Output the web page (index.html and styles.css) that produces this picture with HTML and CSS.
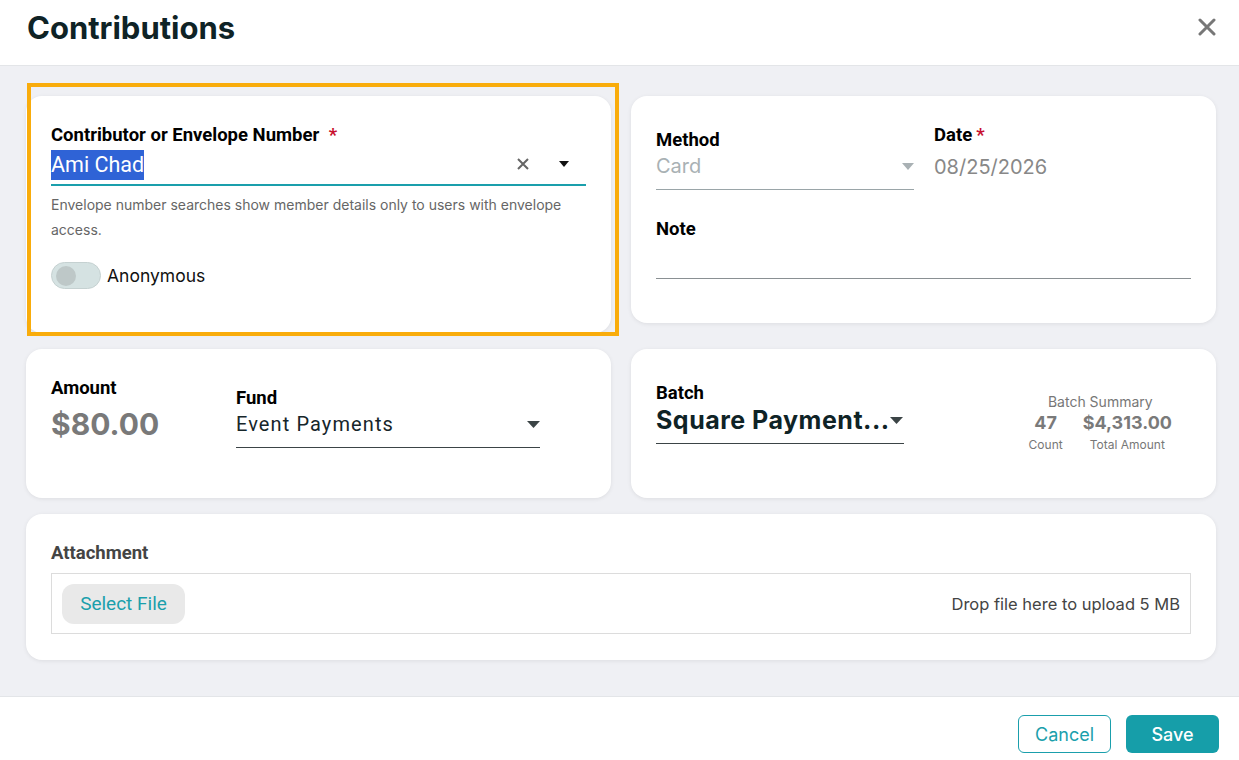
FILE: index.html
```html
<!DOCTYPE html>
<html lang="en">
<head>
    <meta charset="UTF-8">
    <meta name="viewport" content="width=device-width, initial-scale=1.0">
    <title>Contributions</title>
    <link rel="stylesheet" href="styles.css">
</head>
<body>
    <div class="dialog">
        <header class="dlg-head">
            <h1>Contributions</h1>
            <button class="close" aria-label="Close">
                <svg width="18" height="18" viewBox="0 0 18 18"><path d="M2 2 L16 16 M16 2 L2 16" stroke="#777" stroke-width="3" stroke-linecap="round"/></svg>
            </button>
        </header>

        <main class="dlg-body">
            <div class="grid">
                <!-- contributor -->
                <section class="card contrib focused">
                    <label class="lbl">Contributor or Envelope Number <span class="req">*</span></label>
                    <div class="field active">
                        <span class="value"><span class="sel">Ami Chad</span></span>
                        <svg class="clear" width="14" height="14" viewBox="0 0 14 14"><path d="M2 2 L12 12 M12 2 L2 12" stroke="#666" stroke-width="2"/></svg>
                        <svg class="caret" width="12" height="8" viewBox="0 0 12 8"><path d="M1 1 H11 L6 7 Z" fill="#111"/></svg>
                    </div>
                    <p class="hint">Envelope number searches show member details only to users with envelope access.</p>
                    <div class="toggle-row">
                        <span class="toggle"><span class="knob"></span></span>
                        <span class="toggle-lbl">Anonymous</span>
                    </div>
                </section>

                <!-- method / date / note -->
                <section class="card meta">
                    <div class="meta-row">
                        <div class="col method">
                            <label class="lbl">Method</label>
                            <div class="field muted">
                                <span class="value">Card</span>
                                <svg class="caret" width="12" height="7" viewBox="0 0 12 7"><path d="M0 0 H12 L6 7 Z" fill="#a9b1b4"/></svg>
                            </div>
                        </div>
                        <div class="col date">
                            <label class="lbl">Date<span class="req tight">*</span></label>
                            <div class="date-val">08/25/2026</div>
                        </div>
                    </div>
                    <label class="lbl note-lbl">Note</label>
                    <div class="note-line"></div>
                </section>

                <!-- amount / fund -->
                <section class="card amount">
                    <div class="col amt">
                        <label class="lbl">Amount</label>
                        <div class="amt-val">$80.00</div>
                    </div>
                    <div class="col fund">
                        <label class="lbl">Fund</label>
                        <div class="field dark">
                            <span class="value">Event Payments</span>
                            <svg class="caret" width="13" height="7" viewBox="0 0 13 7"><path d="M0 0 H13 L6.5 7 Z" fill="#3b4446"/></svg>
                        </div>
                    </div>
                </section>

                <!-- batch -->
                <section class="card batch">
                    <div class="col batch-sel">
                        <label class="lbl">Batch</label>
                        <div class="field dark big">
                            <span class="value">Square Payment...</span>
                            <svg class="caret" width="13" height="7" viewBox="0 0 13 7"><path d="M0 0 H13 L6.5 7 Z" fill="#3b4446"/></svg>
                        </div>
                    </div>
                    <div class="summary">
                        <div class="sum-title">Batch Summary</div>
                        <div class="sum-cols">
                            <div class="sum-col">
                                <div class="sum-num">47</div>
                                <div class="sum-cap">Count</div>
                            </div>
                            <div class="sum-col">
                                <div class="sum-num">$4,313.00</div>
                                <div class="sum-cap">Total Amount</div>
                            </div>
                        </div>
                    </div>
                </section>

                <!-- attachment -->
                <section class="card attach">
                    <label class="lbl attach-lbl">Attachment</label>
                    <div class="drop">
                        <button class="pick">Select File</button>
                        <span class="drop-txt">Drop file here to upload 5 MB</span>
                    </div>
                </section>
            </div>
        </main>

        <footer class="dlg-foot">
            <button class="btn ghost">Cancel</button>
            <button class="btn solid">Save</button>
        </footer>
    </div>
</body>
</html>
```

FILE: styles.css
```css
body {
    margin: 0;
    padding: 0;
    font-family: Inter, "Noto Sans", sans-serif;
    background-color: #fff;
}

.dialog {
    width: 1239px;
    height: 760px;
    display: flex;
    flex-direction: column;
}

.dlg-head {
    height: 65px;
    border-bottom: 1px solid #e3e5e8;
    display: flex;
    align-items: center;
    justify-content: space-between;
    padding: 0 23px 0 27px;
    box-sizing: content-box;
    flex-shrink: 0;
}

.dlg-head h1 {
    margin: 0 0 10px 0;
    font-size: 31px;
    font-weight: 700;
    color: #0f2326;
}

.close {
    border: none;
    background: none;
    padding: 0;
    margin-bottom: 12px;
    cursor: pointer;
    display: flex;
}

.dlg-body {
    flex: 1;
    background-color: #eff0f4;
    padding: 30px 23px 0 26px;
}

.grid {
    display: grid;
    grid-template-columns: 585px 585px;
    column-gap: 20px;
    row-gap: 16px;
    align-items: start;
}

.card {
    background-color: #fff;
    border-radius: 16px;
    box-shadow: 0 1px 4px rgba(0, 0, 0, 0.08);
    box-sizing: border-box;
    position: relative;
}

/* focus ring on the contributor card */
.focused::after {
    content: "";
    position: absolute;
    left: 1px;
    top: -13px;
    right: -8px;
    bottom: -3px;
    border: 4px solid #f9ac0b;
    pointer-events: none;
}

.lbl {
    display: block;
    font-family: Roboto, sans-serif;
    font-weight: 700;
    font-size: 18.5px;
    line-height: 22px;
    color: #000;
}

.req {
    color: #c8102e;
    margin-left: 5px;
}

.req.tight {
    margin-left: 4px;
}

.field {
    display: flex;
    align-items: flex-start;
    border-bottom: 1px solid #9aa5a8;
    height: 38px;
    padding-top: 1px;
    box-sizing: border-box;
}

.field .value {
    flex: 1;
    font-family: Roboto, sans-serif;
    font-size: 20px;
    line-height: 28px;
    white-space: nowrap;
}

.field .caret {
    margin-top: 11px;
}

/* contributor */
.contrib {
    height: 237px;
    padding: 28px 25px 0 25px;
}

.field.active {
    border-bottom: 2px solid #1a9fac;
    height: 40px;
    padding-top: 5px;
}

.sel {
    background-color: #2f63d6;
    color: #fff;
    font-size: 21.5px;
    padding: 2px 0 3px 0;
}

.clear {
    margin: 6px 28px 0 0;
}

.contrib .caret {
    margin: 9px 16px 0 0;
}

.hint {
    margin: 6px 0 0 0;
    font-size: 14px;
    line-height: 25px;
    color: #666;
}

.toggle-row {
    display: flex;
    align-items: center;
    margin-top: 20px;
    gap: 6px;
}

.toggle {
    width: 50px;
    height: 27px;
    border-radius: 14px;
    background-color: #d5e2e2;
    box-sizing: border-box;
    border: 1px solid #c5d1d1;
    display: flex;
    align-items: center;
    padding-left: 4px;
}

.knob {
    width: 20px;
    height: 20px;
    border-radius: 50%;
    background-color: #bec8c8;
}

.toggle-lbl {
    font-size: 17.5px;
    color: #111;
}

/* method / date / note */
.meta {
    height: 227px;
    padding: 28px 25px 0 25px;
}

.meta-row {
    display: flex;
    gap: 20px;
}

.col.method {
    width: 258px;
    padding-top: 5px;
}

.field.muted {
    height: 39px;
}

.field.muted .value {
    font-family: Inter, sans-serif;
    color: #a9b1b4;
}

.col.date .date-val {
    font-size: 20px;
    line-height: 28px;
    color: #888;
    margin-top: 7px;
}

.note-lbl {
    margin-top: 28px;
}

.note-line {
    border-bottom: 1px solid #8a9093;
    margin-top: 38px;
}

/* amount / fund */
.amount {
    height: 149px;
    padding: 28px 25px 0 25px;
    display: flex;
}

.col.amt {
    width: 185px;
}

.amt-val {
    font-size: 30px;
    line-height: 36px;
    font-weight: 700;
    color: #797979;
    margin-top: 7px;
}

.col.fund {
    width: 304px;
    padding-top: 10px;
}

.field.dark {
    border-bottom: 1px solid #3b4446;
    height: 39px;
}

.field.dark .value {
    color: #16262a;
    letter-spacing: 1.1px;
}

/* batch */
.batch {
    height: 149px;
    padding: 33px 25px 0 25px;
    display: flex;
    justify-content: space-between;
}

.col.batch-sel {
    width: 248px;
}

.field.big {
    height: 40px;
}

.field.big .value {
    flex: none;
    font-family: Inter, sans-serif;
    font-size: 25px;
    line-height: 30px;
    font-weight: 700;
    color: #0f2326;
    letter-spacing: 0.5px;
}

.field.big .caret {
    margin-top: 12px;
}

.summary {
    margin-top: 11px;
    margin-right: 19px;
    text-align: center;
    color: #777;
}

.sum-title {
    font-size: 14px;
    line-height: 18px;
}

.sum-cols {
    display: flex;
    gap: 20px;
    margin-top: 1px;
}

.sum-num {
    font-size: 18px;
    font-weight: 700;
    line-height: 22px;
    color: #7a7a7a;
}

.sum-cap {
    font-size: 12px;
    line-height: 20px;
    margin-top: 1px;
    color: #777;
}

/* attachment */
.attach {
    grid-column: 1 / 3;
    height: 146px;
    padding: 28px 25px 0 25px;
}

.attach-lbl {
    color: #444;
}

.drop {
    margin-top: 9px;
    border: 1px solid #dcdcdc;
    height: 61px;
    box-sizing: border-box;
    display: flex;
    align-items: center;
    justify-content: space-between;
    padding: 0 10px 0 10px;
}

.pick {
    background-color: #e9e9e9;
    border: none;
    border-radius: 12px;
    height: 40px;
    width: 123px;
    font-family: Roboto, sans-serif;
    font-size: 19px;
    color: #1a9fac;
    cursor: pointer;
}

.drop-txt {
    font-size: 16.5px;
    color: #444;
}

/* footer */
.dlg-foot {
    height: 64px;
    border-top: 1px solid #e3e5e8;
    display: flex;
    justify-content: flex-end;
    align-items: flex-start;
    gap: 15px;
    padding: 18px 20px 0 0;
    box-sizing: border-box;
    flex-shrink: 0;
}

.btn {
    width: 93px;
    height: 38px;
    border-radius: 6px;
    font-family: Inter, sans-serif;
    font-size: 18px;
    cursor: pointer;
    box-sizing: border-box;
}

.btn.ghost {
    background-color: #fff;
    border: 1px solid #1a9fac;
    color: #1a9fac;
}

.btn.solid {
    background-color: #169ea9;
    border: none;
    color: #fff;
    font-weight: 500;
}
```
